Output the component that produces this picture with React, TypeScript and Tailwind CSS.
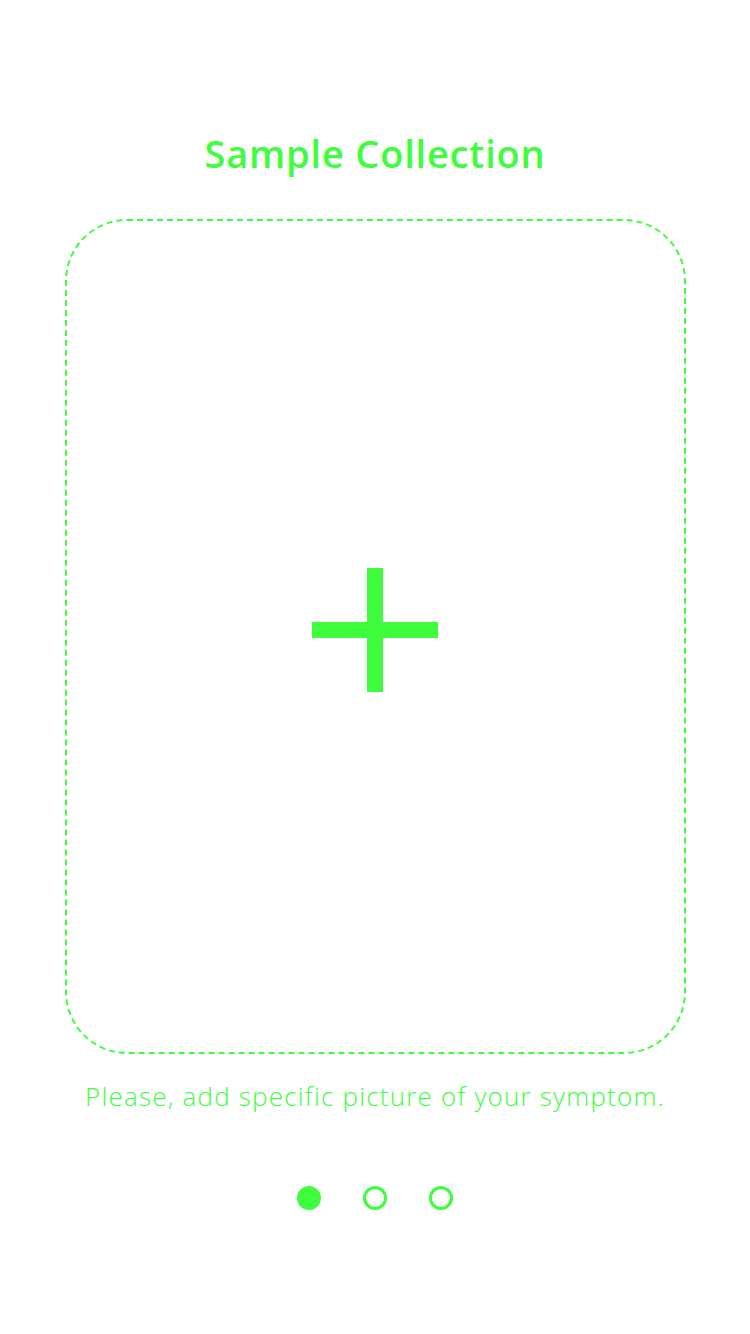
import React from "react";

export default function App() {
  return (
    <div className="w-[750px] h-[1334px] bg-white flex flex-col items-center">
      <h1
        className="mt-[126px] h-[54px] leading-[54px] text-[38px] font-semibold text-[#3dfd3d] tracking-[0.8px]"
        style={{ fontFamily: '"Open Sans", "Noto Sans", sans-serif' }}
      >
        Sample Collection
      </h1>
      <div className="mt-[39px] w-[621px] h-[835px] rounded-[62px] border-2 border-dashed border-[#3dfd3d] flex items-center justify-center">
        <div className="relative w-[126px] h-[124px] -mt-[14px]">
          <div className="absolute left-[55px] top-0 w-[16px] h-[124px] bg-[#3dfd3d]" />
          <div className="absolute left-0 top-[54px] w-[126px] h-[16px] bg-[#3dfd3d]" />
        </div>
      </div>
      <p
        className="mt-[26px] h-[32px] leading-[32px] text-[26px] font-light text-[#3dfd3d] tracking-[1.2px]"
        style={{ fontFamily: '"Open Sans", "Noto Sans", sans-serif' }}
      >
        Please, add specific picture of your symptom.
      </p>
      <div className="mt-[74px] flex items-center gap-[42px]">
        <div className="w-[24px] h-[24px] rounded-full bg-[#3dfd3d]" />
        <div className="w-[24px] h-[24px] rounded-full border-[3px] border-[#3dfd3d]" />
        <div className="w-[24px] h-[24px] rounded-full border-[3px] border-[#3dfd3d]" />
      </div>
    </div>
  );
}
